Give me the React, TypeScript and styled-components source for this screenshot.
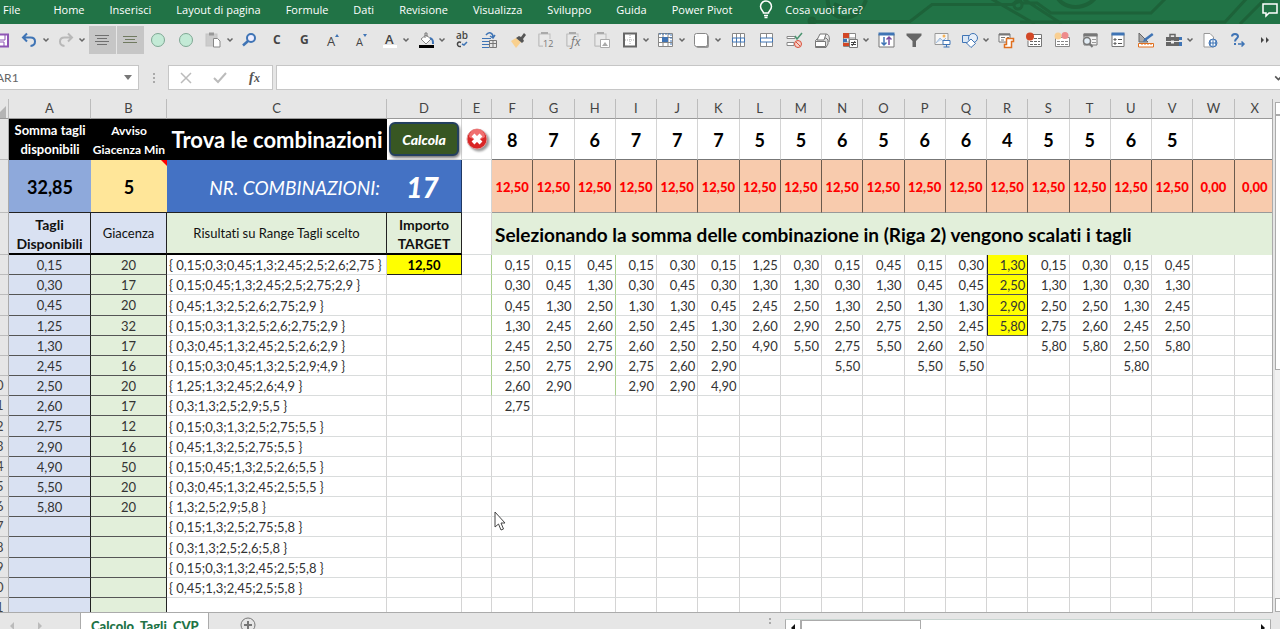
import React from "react";
import styled, { createGlobalStyle, css } from "styled-components";

const GlobalStyle = createGlobalStyle`
  * { box-sizing: border-box; }
  html, body { margin: 0; height: 100%; }
  body { background: #e6e6e6; font-family: Lato, "Open Sans", sans-serif; font-variant-ligatures: none; color: #333; overflow: hidden; }
  button, input { font: inherit; color: inherit; margin: 0; }
`;

const UI_FONT = `"Open Sans", "Noto Sans", sans-serif`;

const Page = styled.div`
  display: flex;
  flex-direction: column;
  height: 100vh;
  overflow: hidden;
  position: relative;
`;

/* ---------- ribbon ---------- */

const Ribbon = styled.nav`
  position: relative;
  display: flex;
  align-items: center;
  flex: none;
  gap: 25px;
  height: 24px;
  padding: 0 2px 4px 3px;
  background: #217346;
  overflow: hidden;
  font-family: ${UI_FONT};
  font-size: 11px;
  font-weight: 500;
  line-height: 20px;
`;

const RibbonTab = styled.button<{ $file?: boolean }>`
  position: relative;
  flex: none;
  padding: 0;
  margin-right: ${(p) => (p.$file ? 8 : 0)}px;
  border: 0;
  background: none;
  color: #fff;
  white-space: nowrap;
`;

const Tell = styled(RibbonTab)`
  display: flex;
  align-items: center;
  gap: 12px;
  margin-left: 2px;
`;

const CommentsButton = styled(RibbonTab)`
  display: flex;
  margin-left: auto;
`;

const Circuit = styled.svg`
  position: absolute;
  top: 0;
  right: 0;
  width: 480px;
  height: 24px;
`;

/* ---------- quick toolbar ---------- */

const Toolbar = styled.div`
  display: flex;
  align-items: center;
  flex: none;
  height: 41px;
  margin-left: -12px;
  padding-bottom: 10px;
  background: #e6e6e6;
`;

const Tool = styled.button<{ $drop?: boolean; $on?: boolean }>`
  flex: none;
  display: flex;
  align-items: center;
  gap: 2px;
  width: ${(p) => (p.$drop ? 36 : 28)}px;
  height: 28px;
  padding: 0 3px;
  border: 0;
  border-left: 1px solid #e6e6e6;
  background: ${(p) => (p.$on ? "#c6c6c6" : "transparent")};
  color: #444;
  svg { flex: none; }
`;

/* ---------- formula bar ---------- */

const FormulaBar = styled.div`
  display: flex;
  flex: none;
  height: 25px;
  margin-left: -8px;
`;

const NameBox = styled.div`
  display: flex;
  align-items: center;
  width: 147px;
  padding-right: 6px;
  border: 1px solid #c6c6c6;
  background: #fff;
`;

const NameInput = styled.input`
  flex: 1;
  min-width: 0;
  height: 22px;
  padding: 0 0 0 3px;
  border: 0;
  background: none;
  color: #666;
  font-size: 12px;
  outline: 0;
`;

const Grip = styled.div`
  display: flex;
  flex-direction: column;
  align-items: center;
  justify-content: center;
  gap: 2px;
  width: 29px;
  i { width: 2px; height: 2px; background: #aaa; }
`;

const FormulaButtons = styled.div`
  display: flex;
  width: 105px;
  border: 1px solid #c6c6c6;
  background: #fff;
`;

const FormulaButton = styled.button`
  flex: 1;
  display: grid;
  place-items: center;
  padding: 0;
  border: 0;
  background: none;
`;

const FormulaField = styled.div`
  flex: 1;
  display: flex;
  align-items: center;
  margin-left: 3px;
  border: 1px solid #c6c6c6;
  border-right: 0;
  background: #fff;
  overflow: hidden;
`;

const FormulaInput = styled.input`
  flex: 1;
  min-width: 0;
  height: 22px;
  border: 0;
  background: none;
  outline: 0;
`;

const Expand = styled.button`
  display: flex;
  width: 8px;
  padding: 0;
  border: 0;
  background: none;
`;

/* ---------- sheet ---------- */

const SheetArea = styled.main`
  flex: 1;
  min-height: 0;
  display: flex;
  padding-top: 9px;
  overflow: hidden;
`;

const SheetView = styled.div`
  flex: 1;
  min-width: 0;
  overflow: hidden;
  border-right: 1px solid #ababab;
  border-bottom: 1px solid #ababab;
`;

const Sheet = styled.table`
  width: calc(100% + 4px);
  table-layout: fixed;
  border-collapse: separate;
  border-spacing: 0;
  background: #fff;
  font-size: 13px;
  line-height: 17px;
`;

const ColHead = styled.th`
  height: 20px;
  padding: 0;
  border-right: 1px solid #bcbcbc;
  border-bottom: 1px solid #999;
  background: #e6e6e6;
  color: #444;
  font-weight: 400;
`;

const Corner = styled(ColHead)`
  svg { display: block; margin-top: 6px; }
`;

const RowHead = styled.th`
  padding: 0;
  border-right: 1px solid #ababab;
  border-bottom: 1px solid #bcbcbc;
  background: #e6e6e6;
  color: #444;
  font-weight: 400;
  div { display: flex; justify-content: flex-end; overflow: hidden; }
  span { flex: none; width: 24px; text-align: center; }
`;

const Row = styled.tr<{ $h?: number }>`
  height: ${(p) => p.$h ?? 20}px;
  &:nth-child(6n) { height: ${(p) => p.$h ?? 21}px; }
`;

const cell = css`
  padding: 2px 2px 0;
  border-right: 1px solid #d4d4d4;
  border-bottom: 1px solid #d9dcdc;
  overflow: hidden;
  white-space: nowrap;
`;

const Cell = styled.td`
  ${cell}
  text-align: right;
`;

const BlackHead = styled.th<{ $size: number }>`
  padding: 0;
  background: #000;
  color: #fff;
  font-size: ${(p) => p.$size}px;
  line-height: ${(p) => (p.$size > 16 ? 24 : 19)}px;
  white-space: nowrap;
  overflow: hidden;
`;

const CountCell = styled.td`
  ${cell}
  border-bottom-color: #777;
  color: #000;
  font-size: 18px;
  font-weight: 700;
  text-align: center;
`;

const SumCell = styled.td`
  ${cell}
  padding: 2px 0 0;
  border-right-color: #6b5a4c;
  border-bottom-color: #999;
  background: #f8cbad;
  color: #f00;
  font-size: 13px;
  font-weight: 900;
  text-align: center;
`;

const Tile = styled.td<{ $bg: string }>`
  position: relative;
  padding: 2px 0 0;
  border-bottom: 1px solid #222;
  background: ${(p) => p.$bg};
  color: #000;
  font-size: 18px;
  font-weight: 700;
  text-align: center;
`;

const NoteMark = styled.span`
  position: absolute;
  top: 0;
  right: 0;
  border-top: 6px solid #f00;
  border-left: 6px solid transparent;
`;

const BlueLabel = styled(Tile)`
  padding-right: 7px;
  color: #fff;
  font-size: 19px;
  font-weight: 400;
  font-style: italic;
  text-align: right;
`;

const BlueTotal = styled(Tile)`
  padding-right: 3px;
  border-right: 1px solid #1f3864;
  color: #fff;
  font-size: 28px;
  font-weight: 900;
  font-style: italic;
`;

const FieldHead = styled.th<{ $bg: string; $bold?: boolean }>`
  padding: 1px 0 0;
  border-right: 1px solid #222;
  border-bottom: 2px solid #000;
  background: ${(p) => p.$bg};
  color: #111;
  font-size: ${(p) => (p.$bold ? 14 : 13)}px;
  font-weight: ${(p) => (p.$bold ? 700 : 400)};
  line-height: 19px;
`;

const Banner = styled.th`
  padding: 0 3px;
  background: #e2efda;
  color: #000;
  font-size: 19px;
  font-weight: 700;
  text-align: left;
  white-space: nowrap;
`;

const StockCell = styled.td<{ $bg: string }>`
  padding: 1px 0 0;
  border-right: 1px solid #222;
  border-bottom: 1px solid #555;
  background: ${(p) => p.$bg};
  text-align: center;
`;

const ResultCell = styled.td`
  ${cell}
`;

const ValueCell = styled(Cell)<{ $hot?: boolean; $guide?: boolean }>`
  ${(p) => p.$guide && css`border-right-color: #a9d08e;`}
  ${(p) => p.$hot && css`
    border-right-color: #222;
    border-bottom-color: #555;
    background: #ff0;
    box-shadow: inset 1px 0 #222;
  `}
`;

const TargetCell = styled(Cell)`
  border-right-color: #222;
  border-bottom-color: #222;
  background: #ff0;
  color: #000;
  font-weight: 700;
  text-align: center;
`;

const ControlCell = styled(Cell)`
  padding: 0 2px;
  text-align: center;
  overflow: visible;
`;

const CalcButton = styled.button`
  display: block;
  width: 100%;
  height: 34px;
  padding: 0;
  border: 2px solid #24405f;
  border-radius: 6px;
  background: #385723;
  box-shadow: 1px 2px 3px #777;
  color: #fff;
  font-size: 14px;
  font-weight: 900;
  font-style: italic;
`;

const ClearButton = styled.button`
  display: grid;
  place-items: center;
  width: 100%;
  padding: 0;
  border: 0;
  background: none;
  svg { overflow: visible; filter: drop-shadow(2px 2px 1px #999); }
`;

/* ---------- scroll bars and sheet tabs ---------- */

const VScroll = styled.div`
  flex: none;
  display: flex;
  flex-direction: column;
  width: 7px;
  margin-top: 3px;
  padding-left: 2px;
  padding-bottom: 1px;
  overflow: hidden;
`;

const VPiece = styled.div<{ $h?: number; $track?: boolean }>`
  flex: ${(p) => (p.$h ? "none" : "1")};
  width: 17px;
  height: ${(p) => (p.$h ? p.$h + "px" : "auto")};
  border: 1px solid #ababab;
  border-color: ${(p) => (p.$track ? "transparent" : "#ababab")};
  background: ${(p) => (p.$track ? "#f1f1f1" : "#fff")};
`;

const Footer = styled.footer`
  flex: none;
  display: flex;
  height: 16px;
  overflow: hidden;
`;

const TabNav = styled.div`
  display: flex;
  align-items: center;
  gap: 22px;
  width: 81px;
  height: 26px;
  padding-left: 9px;
  border-right: 1px solid #ababab;
`;

const SheetTab = styled.button`
  flex: none;
  height: 26px;
  padding: 0 9px 0 10px;
  border: 0;
  border-right: 1px solid #ababab;
  background: #fff;
  color: #217346;
  font-size: 13px;
  font-weight: 900;
  line-height: 20px;
`;

const AddSheet = styled.button`
  flex: none;
  height: 26px;
  margin: 0 auto 0 30px;
  padding: 0;
  border: 0;
  background: none;
`;

const HScroll = styled.div`
  flex: none;
  display: flex;
  width: 38%;
  height: 17px;
  margin-top: 6px;
  margin-right: 9px;
  border: 1px solid #ababab;
  border-top-color: #c8d4d0;
  background: #fff;
`;

const HArrow = styled.button`
  flex: none;
  display: grid;
  place-items: center;
  width: 14px;
  padding: 0;
  border: 0;
  background: none;
`;

const HThumb = styled.div`
  width: 25%;
  margin-right: auto;
  border: 1px solid #ababab;
  border-left-width: 2px;
`;

const Cursor = styled.svg`
  position: absolute;
  left: 494px;
  top: 511px;
`;

/* ---------- icons ---------- */

const Svg = ({ children, w = 20 }: { children: React.ReactNode; w?: number }) => (
  <svg width={w} height="20" viewBox={`0 0 ${w} 20`} fill="none" stroke="#666" aria-hidden="true">
    {children}
  </svg>
);

const Chevron = () => (
  <svg width="8" height="6" viewBox="0 0 8 6" fill="none" stroke="#666" strokeWidth="1.5" aria-hidden="true">
    <path d="M1.5 1.5 4 4l2.5-2.5" />
  </svg>
);

const BLUE = "#3f74b5";
const text = { stroke: "none", fontFamily: "Open Sans", fontWeight: 700 };

const Clipboard = ({ children }: { children: React.ReactNode }) => (
  <Svg>
    <path d="M3 4.500h10v5M3 4v12h5" stroke="#bbb" />
    <rect x="3" y="4" width="11" height="12" fill="#e9e9e9" stroke="#bdbdbd" />
    <path d="M6 4V3h5v1" stroke="#aaa" strokeWidth="2" />
    {children}
  </Svg>
);

type ToolDef = { label: string; icon: React.ReactNode; drop?: boolean; on?: boolean };

const circleIcon = <Svg><circle cx="10" cy="10" r="6.5" fill="#c3ead6" stroke="#7fa894" /></Svg>;

const tools: ToolDef[] = [
  { label: "Salva", icon: <Svg><path d="M3 4.500h13v12H3z" stroke="#8e55b5" strokeWidth="2" fill="#fff" /><path d="M6 5v5h7V5M7 16v-4h5v4" stroke="#8e55b5" /></Svg> },
  { label: "Annulla", drop: true, icon: <Svg><path d="M7 3.500 3 7.500l4 4M3 7.500h7.500c6 0 6 8 0 8.500" stroke={BLUE} strokeWidth="2" /></Svg> },
  { label: "Ripeti", drop: true, icon: <Svg><path d="m12 3.500 4 4-4 4M16 7.500H8.500c-6 0-6 8 0 8.500" stroke="#b8b8b8" strokeWidth="2" /></Svg> },
  { label: "Allinea al centro", on: true, icon: <Svg><path d="M3 5.500h14M5 8.500h10M3 11.500h14M5 14.500h10" stroke="#707070" /></Svg> },
  { label: "Allinea in mezzo", on: true, icon: <Svg><path d="M3 6.500h14M5 9.500h10M3 12.500h14" stroke="#707a60" /></Svg> },
  { label: "Cerchio 1", icon: circleIcon },
  { label: "Cerchio 2", icon: circleIcon },
  { label: "Incolla", drop: true, icon: <Svg><rect x="2" y="4" width="11" height="12" fill="#ccc" stroke="#c4c4c4" /><path d="M5 4h5" stroke="#999" strokeWidth="3" /><path d="M9.500 8.500h4l2.500 2.500v6H9.500z" fill="#fff" stroke="#888" /></Svg> },
  { label: "Trova", icon: <Svg><circle cx="11" cy="8" r="4" stroke={BLUE} strokeWidth="2" fill="#eef" /><path d="m8 11-5 4.500" stroke={BLUE} strokeWidth="2.500" /></Svg> },
  { label: "Corsivo", icon: <Svg><text x="5" y="14" fontSize="12" fill="#444" {...text}>C</text></Svg> },
  { label: "Grassetto", icon: <Svg><text x="4" y="14" fontSize="12" fill="#444" {...text}>G</text></Svg> },
  { label: "Aumenta carattere", icon: <Svg><text x="3" y="16" fontSize="13" fill="#444" {...text} fontWeight={500}>A</text><path d="m11 7 2-3 2 3z" fill={BLUE} stroke="none" /></Svg> },
  { label: "Riduci carattere", icon: <Svg><text x="4" y="16" fontSize="11" fill="#444" {...text} fontWeight={500}>A</text><path d="m11 4 2 3 2-3z" fill={BLUE} stroke="none" /></Svg> },
  { label: "Colore carattere", drop: true, icon: <Svg><text x="5" y="14" fontSize="13" fill="#444" {...text} fontWeight={600}>A</text><path d="M3 16.500h14" stroke="#fff" strokeWidth="3" /></Svg> },
  { label: "Colore riempimento", drop: true, icon: <Svg><path d="m5 9 5-4 5 4-5 5z" fill="#fff" stroke="#888" /><path d="M9 8V3h2v4" stroke="#777" /><path d="M14 8c3 1 3 3 3 6" stroke={BLUE} strokeWidth="2" /><path d="M3 16.500h15" stroke="#000" strokeWidth="3" /></Svg> },
  { label: "Controllo ortografia", icon: <Svg><text x="4" y="9" fontSize="10" fill="#444" {...text} fontWeight={600}>ab</text><path d="M9 12.500c-4-2-5 4-1 4h1" stroke="#444" strokeWidth="1.500" /><path d="m10 14 2 1 3-3" stroke={BLUE} strokeWidth="1.500" /></Svg> },
  { label: "Intestazione", icon: <Svg><path d="M2 8.500h9M2 11.500h7M2 14.500h7M2 17.500h7" stroke={BLUE} /><path d="M6 5c3-4 7-2 7 2m-3-1 3 2 2-3" stroke={BLUE} strokeWidth="1.500" /><path d="M9.500 10.500h7v7h-7zM9.500 13.500h7M13 10v7" stroke="#777" /></Svg> },
  { label: "Copia formato", icon: <Svg><path d="m3 11 5-3 5 4-5 6z" fill="#f9d08e" stroke="none" /><path d="m8 8 3-2 2 1 3-4 2 2-3 4 1 2-2 2z" fill="#555" stroke="none" /></Svg> },
  { label: "Incolla valori", icon: <Clipboard><path d="M7 9h10v9H7z" fill="#e6e6e6" stroke="none" /><text x="7" y="17" fontSize="9" fill="#777" {...text} fontWeight={500}>12</text></Clipboard> },
  { label: "Incolla formule", icon: <Clipboard><path d="M7 7h10v11H7z" fill="#e6e6e6" stroke="none" /><text x="7" y="16" fontSize="12" fill="#777" {...text} fontWeight={400} fontStyle="italic">fx</text></Clipboard> },
  { label: "Incolla immagine", icon: <Clipboard><path d="M8.500 9.500h9v8h-9z" fill="#fff" stroke="#aaa" /><path d="m10 16 3-4 3 4z" fill="#aaa" stroke="none" /></Clipboard> },
  { label: "Bordi", drop: true, icon: <Svg><path d="M4 3.500h12v13H4z" fill="#fff" strokeWidth="2" /><path d="M10 5v10M5 10h10" stroke="#aaa" strokeDasharray="1 1" /></Svg> },
  { label: "Seleziona celle", drop: true, icon: <Svg><path d="M2.500 3.500h14v13h-14zM7 3v13M12 3v13M2 7.500h14M2 12.500h14" fill="#fff" stroke="#888" /><path d="M6 7h6v5H6z" fill={BLUE} stroke="none" /><path d="M3 4h12v12" stroke={BLUE} strokeDasharray="2 1" /></Svg> },
  { label: "Forma", drop: true, icon: <Svg><rect x="4" y="5" width="13" height="13" rx="2" fill="#999" stroke="none" /><rect x="2.500" y="3.500" width="13" height="13" rx="2" fill="#fff" stroke="#888" /></Svg> },
  { label: "Inserisci righe", icon: <Svg><path d="M4.500 3.500h12v13h-12zM8.500 3v13M12.500 3v13" fill="#fff" stroke="#888" /><path d="M4.500 8h12v4h-12zM8.500 8v4M12.500 8v4" stroke={BLUE} fill="#fff" /></Svg> },
  { label: "Unisci celle", icon: <Svg><path d="M4.500 3.500h12v13h-12zM10.500 3v13" fill="#fff" stroke="#888" /><path d="M4.500 8h12v4h-12z" fill="#fff" stroke={BLUE} /></Svg> },
  { label: "Convalida dati", icon: <Svg><path d="M3 6.500h8v2H3zM3 12.500h7v3H3z" fill="#fff" stroke="#888" /><path d="m11 6 2 3 5-6" stroke="#4b9470" strokeWidth="1.500" /><circle cx="14" cy="14" r="3.500" fill="#f6d0c8" stroke="#d9503a" /><path d="m12 12 4 4" stroke="#d9503a" /></Svg> },
  { label: "Stampa", icon: <Svg><path d="M3.500 10.500 6 8h8l2 2v4l-2 3.500H3.500z" fill="#ddd" stroke="#777" /><path d="m5 10 3-6h6l-2 6z" fill="#fff" stroke="#777" /><path d="M3.500 11.500h10v5h-10z" fill="#fff" stroke="#777" /><path d="M14 4c3 0 4 4 3 8" stroke="#777" /></Svg> },
  { label: "Formattazione condizionale", drop: true, icon: <Svg><path d="M3.500 3.500h12v13h-12zM3 8h12M3 12h12M9 3v13" fill="#fff" stroke="#888" /><path d="M3 3h6v5H3z" fill="#d24726" stroke="none" /><path d="M3 9h4v3H3z" fill={BLUE} stroke="none" /><path d="M3 13h6v3H3z" fill="#d24726" stroke="none" /><path d="M9.500 9.500h8v8h-8z" fill="#fff" stroke="#777" /><path d="M11 12.500h5M11 14.500h5M15 11l-3 5" stroke="#444" /></Svg> },
  { label: "Ordina", icon: <Svg><path d="M3 4h15v13H3z" fill="#fff" stroke="#777" /><path d="M2.500 4h16" stroke={BLUE} strokeWidth="3" /><path d="M8 7v8m-2.500-2.500L8 15l2.500-2.500" stroke={BLUE} strokeWidth="1.500" /><path d="M13 15V7m-2.500 2.500L13 7l2.500 2.500" stroke="#7a4aa0" strokeWidth="1.500" /></Svg> },
  { label: "Filtro", icon: <Svg><path d="M2.500 3.500h15v2L12 11v6H8.500v-6l-6-5.500z" fill="#666" stroke="none" /></Svg> },
  { label: "Immagine", icon: <Svg><path d="M3 3.500h13v11H3z" fill="#f6f6f6" stroke="#999" /><path d="m4 13 4-5 3 3 3-3" fill="#c9dcf0" stroke="#9fbbdd" /><circle cx="12" cy="6" r="1.500" fill="#f6b35a" stroke="none" /><path d="M11 10.500h7v4h-7zM14.500 15v2m-3 0h6" stroke={BLUE} fill="#fff" /></Svg> },
  { label: "Forme", drop: true, icon: <Svg><path d="M2.500 5.500h8v7h-8z" fill="#dce8f5" stroke={BLUE} /><circle cx="13" cy="8" r="4.500" fill="#e7eff8" stroke={BLUE} /><path d="m11 9 4.500 4.500L11 17.500 6.500 13z" fill="#fff" stroke={BLUE} /></Svg> },
  { label: "Macro", icon: <Svg><path d="M3 4h11v8H3z" fill="#fff" stroke="#777" /><path d="M3 4.500h11" stroke="#777" strokeWidth="2" /><path d="M5 7.500h4M5 10h3M11 7.500h2" stroke="#777" /><path d="M10.500 8.500h7v3h-2v6h-7v-3h2z" stroke="#e07020" strokeWidth="1.500" fill="#fff" /></Svg> },
  { label: "Registra macro", icon: <Svg><path d="M6.500 4.500h11v12H4v-6" fill="#fff" stroke="#777" /><path d="M6 8.500h11M6 11.500h10M6 14.500h10" strokeDasharray="3 1" /><circle cx="6" cy="6.500" r="4" fill="#d24726" stroke="none" /></Svg> },
  { label: "Palloncini", icon: <Svg><path d="M3.500 7.500h14v9h-14z" fill="#fff" stroke="#888" /><path d="M5 11.500h11M5 14.500h11" stroke="#888" strokeDasharray="3 1" /><circle cx="6" cy="6" r="3.500" fill="#f9cf92" stroke="none" /><circle cx="13" cy="5.500" r="3.500" fill="#ee8b8b" stroke="none" /></Svg> },
  { label: "Cerca tabella", icon: <Svg><path d="M4 4h13v11H4z" fill="#f4f4f4" stroke="#777" /><path d="M3.500 5h14" stroke="#777" strokeWidth="3" /><path d="M12 9.500h4M12 12.500h4" stroke="#999" /><circle cx="7" cy="11" r="3.500" fill="#e4eef6" stroke="#777" strokeWidth="1.500" /><path d="m9.500 13.500 3 3.500" stroke="#777" strokeWidth="2" /></Svg> },
  { label: "Modulo", icon: <Svg><path d="M4 3.500h12v13H4z" fill="#fff" stroke="#777" /><path d="M3.500 4h13" stroke={BLUE} strokeWidth="3" /><path d="M6 9h2v1H6zM6 13h2v1H6zM10 9.500h4M10 13.500h4" stroke="#555" /></Svg> },
  { label: "Modalità progettazione", icon: <Svg><path d="M3 3v9h9z" fill="#aaa" stroke="#666" /><path d="m7 12 1-3 8-6 1.500 2-8 6z" fill={BLUE} stroke="none" /><path d="M2.500 13.500h15v3.500h-15zM6 14v1M9 14v1M12 14v1M15 14v1" fill="#fff" stroke="#e07020" /></Svg> },
  { label: "Strumenti", drop: true, icon: <Svg><path d="M2 7h13v4H2zM2 12h13v4H2z" fill="#666" stroke="none" /><path d="M6 7V4.500h5V7" strokeWidth="1.500" /><path d="M7 10.500h3v3H7z" fill="#eee" stroke="none" /><path d="M16.500 7v3m0 2v4" stroke={BLUE} strokeWidth="3" /></Svg> },
  { label: "Pubblica", icon: <Svg><path d="M4 3.500h6l3.500 3.500v10H4z" fill="#fff" stroke="#999" /><circle cx="13" cy="13" r="4" fill="#fff" stroke={BLUE} /><path d="M9 13h8M13 9v8M11 10c-1 2-1 4 0 6M15 10c1 2 1 4 0 6" stroke={BLUE} /></Svg> },
  { label: "Guida in linea", icon: <Svg><path d="M4 6.500C4 3 10 3 10 6.500c0 2-3 2-3 5M7 13v2" stroke={BLUE} strokeWidth="2" /><path d="M10 14h6m-2.500-2.500L16 14l-2.500 2.500" stroke={BLUE} strokeWidth="1.500" /></Svg> },
  { label: "Altri comandi", icon: <Svg><path d="M5 7v6l3-3zM10 7v6l3-3z" fill="#444" stroke="none" /></Svg> },
];

/* ---------- data ---------- */

const tabs = ["File", "Home", "Inserisci", "Layout di pagina", "Formule", "Dati", "Revisione", "Visualizza", "Sviluppo", "Guida", "Power Pivot"];

const stock: [string, string][] = [
  ["0,15", "20"], ["0,30", "17"], ["0,45", "20"], ["1,25", "32"], ["1,30", "17"], ["2,45", "16"], ["2,50", "20"],
  ["2,60", "17"], ["2,75", "12"], ["2,90", "16"], ["4,90", "50"], ["5,50", "20"], ["5,80", "20"],
];

const results = [
  "0,15;0,3;0,45;1,3;2,45;2,5;2,6;2,75", "0,15;0,45;1,3;2,45;2,5;2,75;2,9", "0,45;1,3;2,5;2,6;2,75;2,9",
  "0,15;0,3;1,3;2,5;2,6;2,75;2,9", "0,3;0,45;1,3;2,45;2,5;2,6;2,9", "0,15;0,3;0,45;1,3;2,5;2,9;4,9",
  "1,25;1,3;2,45;2,6;4,9", "0,3;1,3;2,5;2,9;5,5", "0,15;0,3;1,3;2,5;2,75;5,5", "0,45;1,3;2,5;2,75;5,5",
  "0,15;0,45;1,3;2,5;2,6;5,5", "0,3;0,45;1,3;2,45;2,5;5,5", "1,3;2,5;2,9;5,8", "0,15;1,3;2,5;2,75;5,8",
  "0,3;1,3;2,5;2,6;5,8", "0,15;0,3;1,3;2,45;2,5;5,8", "0,45;1,3;2,45;2,5;5,8",
];

const combos: string[][] = [
  "0,15 0,30 0,45 1,30 2,45 2,50 2,60 2,75",
  "0,15 0,45 1,30 2,45 2,50 2,75 2,90",
  "0,45 1,30 2,50 2,60 2,75 2,90",
  "0,15 0,30 1,30 2,50 2,60 2,75 2,90",
  "0,30 0,45 1,30 2,45 2,50 2,60 2,90",
  "0,15 0,30 0,45 1,30 2,50 2,90 4,90",
  "1,25 1,30 2,45 2,60 4,90",
  "0,30 1,30 2,50 2,90 5,50",
  "0,15 0,30 1,30 2,50 2,75 5,50",
  "0,45 1,30 2,50 2,75 5,50",
  "0,15 0,45 1,30 2,50 2,60 5,50",
  "0,30 0,45 1,30 2,45 2,50 5,50",
  "1,30 2,50 2,90 5,80",
  "0,15 1,30 2,50 2,75 5,80",
  "0,30 1,30 2,50 2,60 5,80",
  "0,15 0,30 1,30 2,45 2,50 5,80",
  "0,45 1,30 2,45 2,50 5,80",
].map((s) => s.split(" "));

const letters = "ABCDEFGHIJKLMNOPQRSTUVWX".split("");
const comboCols = letters.slice(5);
const bodyRows = Array.from({ length: 18 }, (_, i) => i);
const SELECTED = 12;

/* One-digit numbers fall wholly outside the narrow header strip. */
const RowNumber = ({ n }: { n: number }) => (
  <RowHead scope="row" aria-label={String(n)}>
    {n > 9 && <div><span>{n}</span></div>}
  </RowHead>
);

export default function App() {
  return (
    <Page>
      <GlobalStyle />
      <Ribbon>
        <Circuit viewBox="0 0 480 24" fill="none" stroke="#1d6239" strokeWidth="3" aria-hidden="true">
          <path d="M10 21.500h100l22-17h80l10-4M190-2l45 26M222-2l40 26M222 3h15l14 10h100l14-14M220 22h205l22-24M440 24l24-24" />
          <circle cx="12" cy="21" r="3" />
          <circle cx="218" cy="5" r="4" />
          <path d="M255-8c5 20 35 20 44 0M28-4c-4 24 28 32 38 4M34 4l18 8" strokeWidth="4" />
        </Circuit>
        {tabs.map((t) => <RibbonTab key={t} $file={t === "File"}>{t}</RibbonTab>)}
        <Tell>
          <svg width="14" height="20" viewBox="0 0 14 20" fill="none" stroke="#fff" strokeWidth="1.500" aria-hidden="true">
            <path d="M4.500 13c0-2-3-3-3-6.500a5.500 5.500 0 0 1 11 0c0 3.500-3 4.500-3 6.500zM5 15.500h4M5.500 17.500h3" />
          </svg>
          Cosa vuoi fare?
        </Tell>
        <CommentsButton aria-label="Commenti">
          <svg width="16" height="16" viewBox="0 0 16 16" fill="none" stroke="#fff" strokeWidth="1.500" aria-hidden="true">
            <path d="M1 2h14v9H7l-3 3v-3H1z" />
          </svg>
        </CommentsButton>
      </Ribbon>

      <Toolbar role="toolbar">
        {tools.map((t) => (
          <Tool key={t.label} aria-label={t.label} $drop={t.drop} $on={t.on}>
            {t.icon}
            {t.drop && <Chevron />}
          </Tool>
        ))}
      </Toolbar>

      <FormulaBar>
        <NameBox>
          <NameInput aria-label="Casella nome" defaultValue="AR1" />
          <svg width="8" height="5" aria-hidden="true"><path d="M0 0h8L4 5z" fill="#777" /></svg>
        </NameBox>
        <Grip><i /><i /><i /></Grip>
        <FormulaButtons>
          <FormulaButton aria-label="Annulla immissione">
            <svg width="12" height="12" viewBox="0 0 12 12" stroke="#bbb" strokeWidth="1.500"><path d="m1 1 10 10M11 1 1 11" /></svg>
          </FormulaButton>
          <FormulaButton aria-label="Invio">
            <svg width="14" height="12" viewBox="0 0 14 12" fill="none" stroke="#bbb" strokeWidth="2"><path d="m1 6 4 4 8-9" /></svg>
          </FormulaButton>
          <FormulaButton aria-label="Inserisci funzione">
            <svg width="16" height="16" viewBox="0 0 16 16">
              <text x="2" y="12" fontSize="14" fontStyle="italic" fontWeight="700" fontFamily="Liberation Serif" fill="#555">f</text>
              <text x="7" y="12" fontSize="12" fontStyle="italic" fontWeight="700" fontFamily="Liberation Serif" fill="#555">x</text>
            </svg>
          </FormulaButton>
        </FormulaButtons>
        <FormulaField>
          <FormulaInput aria-label="Barra della formula" />
          <Expand aria-label="Espandi barra della formula">
            <svg width="10" height="6" viewBox="0 0 10 6" fill="none" stroke="#555" strokeWidth="2"><path d="m4 1 4 4 4-4" /></svg>
          </Expand>
        </FormulaField>
      </FormulaBar>

      <SheetArea>
        <SheetView>
          <Sheet>
            <colgroup>
              <col width={9} /><col width={82} /><col width={76} /><col width={220} /><col width={75} /><col width={30} />
              {comboCols.map((c) => <col key={c} />)}
            </colgroup>
            <thead>
              <tr>
                <Corner aria-label="Seleziona tutto"><svg width="6" height="12"><path d="M6 0v12H0V6z" fill="#b4b4b4" /></svg></Corner>
                {letters.map((l) => <ColHead key={l} scope="col">{l}</ColHead>)}
              </tr>
            </thead>
            <tbody>
              <Row $h={41}>
                <RowNumber n={1} />
                <BlackHead $size={13}>Somma tagli<br />disponibili</BlackHead>
                <BlackHead $size={12}>Avviso<br />Giacenza Min</BlackHead>
                <BlackHead $size={22}>Trova le combinazioni</BlackHead>
                <ControlCell><CalcButton>Calcola</CalcButton></ControlCell>
                <ControlCell>
                  <ClearButton aria-label="Cancella">
                    <svg width="22" height="22" viewBox="0 0 22 22">
                      <circle cx="11" cy="11" r="10" fill="#d92525" stroke="#d99" />
                      <path d="M3 9a8 8 0 0 1 16 0c-4 3-12 3-16 0z" fill="#f07070" />
                      <path d="m7 7 8 8M15 7l-8 8" stroke="#fff" strokeWidth="4" />
                    </svg>
                  </ClearButton>
                </ControlCell>
                {comboCols.map((c, i) => <CountCell key={c}>{combos[i]?.length}</CountCell>)}
              </Row>
              <Row $h={53}>
                <RowNumber n={2} />
                <Tile $bg="#8ea9db">32,85</Tile>
                <Tile $bg="#ffe699">5<NoteMark /></Tile>
                <BlueLabel $bg="#4472c4">NR. COMBINAZIONI:</BlueLabel>
                <BlueTotal $bg="#4472c4">17</BlueTotal>
                <Cell />
                {comboCols.map((c, i) => <SumCell key={c}>{combos[i] ? "12,50" : "0,00"}</SumCell>)}
              </Row>
              <Row $h={42}>
                <RowNumber n={3} />
                <FieldHead $bg="#d9e1f2" $bold>Tagli<br />Disponibili</FieldHead>
                <FieldHead $bg="#d9e1f2">Giacenza</FieldHead>
                <FieldHead $bg="#e2efda">Risultati su Range Tagli scelto</FieldHead>
                <FieldHead $bg="#e2efda" $bold>Importo<br />TARGET</FieldHead>
                <Cell />
                <Banner colSpan={19}>Selezionando la somma delle combinazione in (Riga 2) vengono scalati i tagli</Banner>
              </Row>
              {bodyRows.map((r) => (
                <Row key={r}>
                  <RowNumber n={r + 4} />
                  <StockCell $bg="#d9e1f2">{stock[r]?.[0]}</StockCell>
                  <StockCell $bg="#e2efda">{stock[r]?.[1]}</StockCell>
                  <ResultCell>{results[r] && `{ ${results[r]} }`}</ResultCell>
                  {r === 0 ? <TargetCell>12,50</TargetCell> : <Cell />}
                  <ValueCell $guide={r < 7} />
                  {comboCols.map((c, i) => (
                    <ValueCell key={c} $hot={i === SELECTED && r < 4} $guide={c === "H" && r < 7}>
                      {combos[i]?.[r]}
                    </ValueCell>
                  ))}
                </Row>
              ))}
            </tbody>
          </Sheet>
        </SheetView>
        <VScroll>
          <VPiece $h={13} />
          <VPiece $h={255} />
          <VPiece $track />
          <VPiece $h={14} />
        </VScroll>
      </SheetArea>

      <Footer>
        <TabNav>
          <svg width="6" height="8"><path d="M5 0v8L1 4z" fill="#bbb" /></svg>
          <svg width="6" height="8"><path d="M1 0v8l4-4z" fill="#bbb" /></svg>
        </TabNav>
        <SheetTab>Calcolo_Tagli_CVP</SheetTab>
        <AddSheet aria-label="Nuovo foglio">
          <svg width="18" height="18" viewBox="0 0 18 18" fill="none" stroke="#777">
            <circle cx="9" cy="9" r="7" /><path d="M5 9h8M9 5v8" strokeWidth="2" />
          </svg>
        </AddSheet>
        <Grip><i /><i /></Grip>
        <HScroll>
          <HArrow aria-label="Scorri a sinistra"><svg width="6" height="8"><path d="M5 0v8L1 4z" fill="#111" /></svg></HArrow>
          <HThumb />
          <HArrow aria-label="Scorri a destra"><svg width="6" height="8"><path d="M1 0v8l4-4z" fill="#111" /></svg></HArrow>
        </HScroll>
      </Footer>

      <Cursor width="14" height="20" viewBox="0 0 14 20" fill="#fff" stroke="#444" aria-hidden="true">
        <path d="M1 1v15l3.500-3 2.500 6 2.500-1-2.500-6H11z" />
      </Cursor>
    </Page>
  );
}
